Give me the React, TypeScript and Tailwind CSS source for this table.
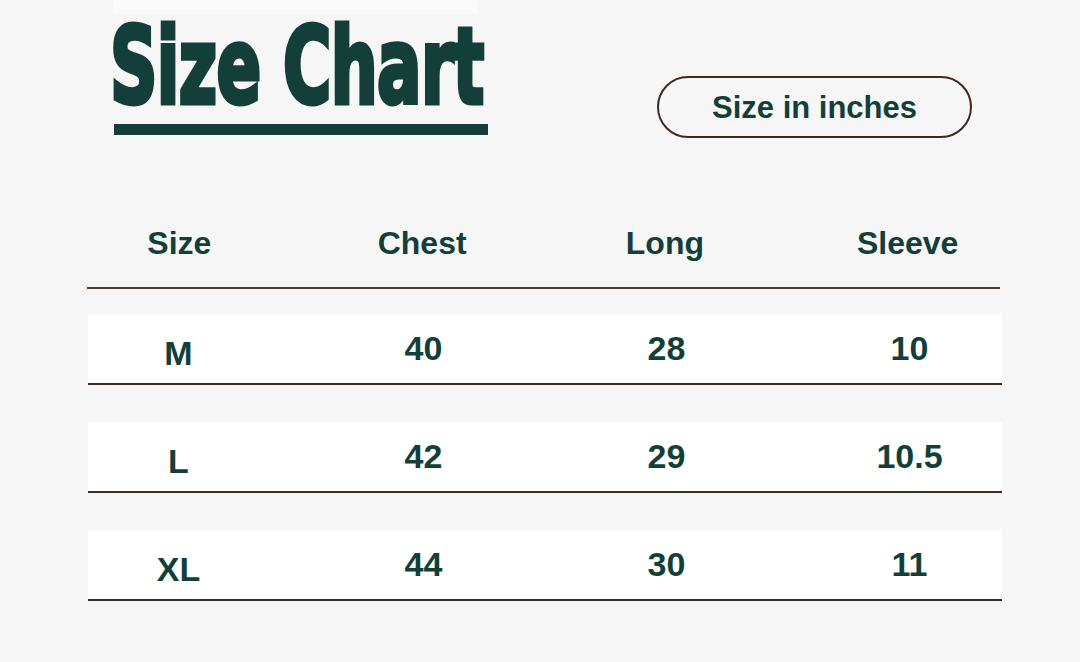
const rows = [
  { size: "M", chest: "40", long: "28", sleeve: "10" },
  { size: "L", chest: "42", long: "29", sleeve: "10.5" },
  { size: "XL", chest: "44", long: "30", sleeve: "11" },
];

const heads = ["Size", "Chest", "Long", "Sleeve"];

export default function App() {
  return (
    <div className="w-[1080px] h-[662px] overflow-hidden bg-[#f6f6f6] text-[#143f39] font-['Liberation_Sans',Arial,sans-serif]">
      {/* Header */}
      <div className="flex items-start">
        <div className="ml-[110px] w-[380px] shrink-0 relative">
          <div className="absolute left-[3px] top-0 w-[365px] h-[14px] bg-[#fafafa]" />
          <div className="relative pt-[14px] h-[124px] whitespace-nowrap">
            <span className="inline-block origin-left scale-x-[0.622] font-['DejaVu_Sans',sans-serif] font-bold text-[106px] leading-none tracking-[-1px] [-webkit-text-stroke:5px_#143f39]">
              Size Chart
            </span>
          </div>
          <div className="ml-[4px] w-[374px] h-[11px] bg-[#143f39]" />
        </div>
        <div className="ml-auto mr-[108px] mt-[76px] w-[315px] h-[62px] pt-[3px] rounded-full border-2 border-[#3b2b22] flex items-center justify-center">
          <span className="text-[31px] font-bold">Size in inches</span>
        </div>
      </div>

      {/* Table */}
      <div className="ml-[87px] w-[913px] mt-[86px]">
        <div className="grid grid-cols-4 content-start -mx-[29px] h-[63px] leading-[38px] text-[32px] font-bold text-center">
          {heads.map((h) => (
            <div key={h}>{h}</div>
          ))}
        </div>
        <div className="h-[2px] bg-[#4a3a30]" />

        <div className="flex flex-col gap-[37px] mt-[25px]">
          {rows.map((r) => (
            <div key={r.size} className="w-[914px] ml-px">
              <div className="h-[69px] bg-white">
                <div className="grid grid-cols-4 -mx-[29px] h-full items-center text-[34px] font-bold text-center">
                  <div className="pt-[10px] -ml-[4px]">{r.size}</div>
                  <div>{r.chest}</div>
                  <div>{r.long}</div>
                  <div>{r.sleeve}</div>
                </div>
              </div>
              <div className="h-[2px] bg-[#3b2e26]" />
            </div>
          ))}
        </div>
      </div>
    </div>
  );
}
